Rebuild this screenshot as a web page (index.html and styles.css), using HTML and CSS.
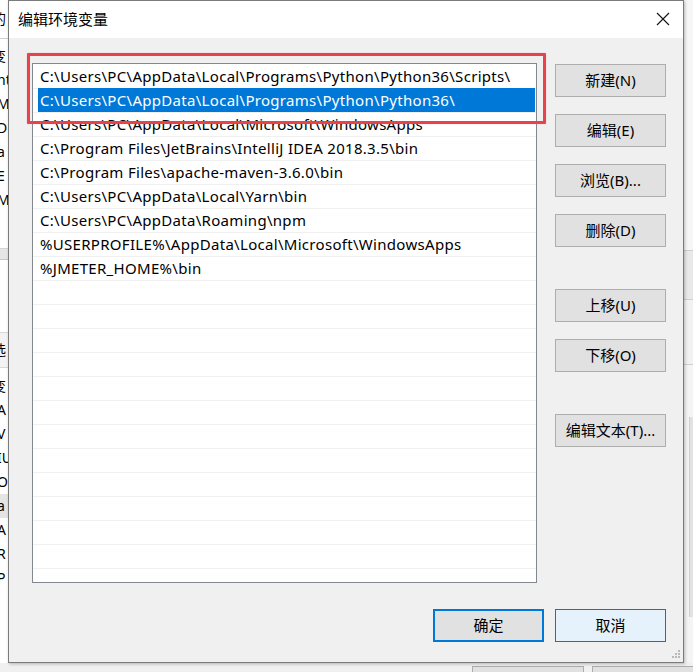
FILE: index.html
```html
<!DOCTYPE html>
<html lang="zh-CN">
<head>
<meta charset="utf-8">
<title>编辑环境变量</title>
<link rel="stylesheet" href="styles.css">
</head>
<body>
<div class="desktop">
  <div class="bgwin">
    <div class="bg-left">
      <div class="bg-top"><span class="frag f-cjk">的</span></div>
      <div class="bg-group1">
        <div class="frag f-cjk">变</div>
        <div class="frag">nt</div>
        <div class="frag">MA</div>
        <div class="frag">Dr</div>
        <div class="frag">a</div>
        <div class="frag">E</div>
        <div class="frag">M</div>
      </div>
      <div class="bg-band"></div>
      <div class="bg-head"><span class="frag f-cjk">选</span></div>
      <div class="bg-group2">
        <div class="frag f-cjk">变</div>
        <div class="frag">A</div>
        <div class="frag">V</div>
        <div class="frag">IU</div>
        <div class="frag">OS</div>
        <div class="frag hl">a</div>
        <div class="frag">A</div>
        <div class="frag">R</div>
        <div class="frag">P</div>
      </div>
    </div>
    <div class="bg-right">
      <div class="r1"></div>
      <div class="r2"></div>
      <div class="r3"></div>
      <div class="r4"></div>
    </div>
    <div class="bg-bottom">
      <span class="bgbtn b1"></span>
      <span class="bgbtn b2"></span>
    </div>
  </div>

  <div class="dialog">
    <div class="titlebar">
      <span class="title">编辑环境变量</span>
      <span class="close">
        <svg width="14" height="14" viewBox="0 0 14 14"><path d="M1 1 L13 13 M13 1 L1 13" stroke="#111" stroke-width="1.1" fill="none"/></svg>
      </span>
    </div>
    <div class="content">
      <div class="main">
        <div class="listbox">
          <div class="row"><span class="cell">C:\Users\PC\AppData\Local\Programs\Python\Python36\Scripts\</span></div>
          <div class="row"><span class="cell selected">C:\Users\PC\AppData\Local\Programs\Python\Python36\</span></div>
          <div class="row"><span class="cell">C:\Users\PC\AppData\Local\Microsoft\WindowsApps</span></div>
          <div class="row"><span class="cell">C:\Program Files\JetBrains\IntelliJ IDEA 2018.3.5\bin</span></div>
          <div class="row"><span class="cell">C:\Program Files\apache-maven-3.6.0\bin</span></div>
          <div class="row"><span class="cell">C:\Users\PC\AppData\Local\Yarn\bin</span></div>
          <div class="row"><span class="cell">C:\Users\PC\AppData\Roaming\npm</span></div>
          <div class="row"><span class="cell">%USERPROFILE%\AppData\Local\Microsoft\WindowsApps</span></div>
          <div class="row"><span class="cell">%JMETER_HOME%\bin</span></div>
          <div class="row"></div><div class="row"></div><div class="row"></div>
          <div class="row"></div><div class="row"></div><div class="row"></div>
          <div class="row"></div><div class="row"></div><div class="row"></div>
          <div class="row"></div><div class="row"></div><div class="row"></div>
          <div class="row"></div>
        </div>
        <div class="buttons">
          <button class="btn">新建(N)</button>
          <button class="btn">编辑(E)</button>
          <button class="btn">浏览(B)...</button>
          <button class="btn">删除(D)</button>
          <button class="btn gap-lg">上移(U)</button>
          <button class="btn">下移(O)</button>
          <button class="btn gap-lg">编辑文本(T)...</button>
        </div>
      </div>
      <div class="footer">
        <button class="btn btn-default">确定</button>
        <button class="btn btn-hover">取消</button>
      </div>
      <svg class="grip" width="12" height="12" viewBox="0 0 12 12">
        <g fill="#b8b8b8">
          <rect x="9" y="1" width="2" height="2"/>
          <rect x="6" y="4" width="2" height="2"/><rect x="9" y="4" width="2" height="2"/>
          <rect x="3" y="7" width="2" height="2"/><rect x="6" y="7" width="2" height="2"/><rect x="9" y="7" width="2" height="2"/>
        </g>
      </svg>
    </div>
  </div>

  <div class="highlight-box"></div>
</div>
</body>
</html>
```

FILE: styles.css
```css
html, body {
  margin: 0;
  padding: 0;
}
body {
  width: 693px;
  height: 672px;
  overflow: hidden;
  background: #f0f0f0;
  font-family: "Noto Sans", "Noto Sans CJK SC", sans-serif;
  color: #000;
}
.desktop {
  position: relative;
  width: 693px;
  height: 672px;
  overflow: hidden;
}

/* background window (partially visible behind dialog) */
.bgwin {
  position: absolute;
  left: 0;
  top: 0;
  width: 693px;
  height: 672px;
  background: #f0f0f0;
}
.bg-left {
  position: absolute;
  left: 0;
  top: 0;
  width: 8px;
  height: 672px;
  background: #fff;
  overflow: hidden;
  display: flex;
  flex-direction: column;
}
.frag {
  font-size: 14px;
  line-height: 24px;
  height: 24px;
  margin-left: -3px;
  white-space: nowrap;
}
.f-cjk { margin-left: -8px; }
.bg-top {
  height: 38px;
  border-bottom: 1px solid #cfcfcf;
  display: flex;
  align-items: center;
}
.bg-group1 {
  padding-top: 5px;
  height: 204px;
  border-bottom: 1px solid #d5d5d5;
}
.bg-band {
  height: 10px;
  background: #e6e6e6;
  border-bottom: 1px solid #c8c8c8;
}
.bg-head {
  margin-top: 72px;
  height: 34px;
  background: #f3f3f3;
  border-top: 1px solid #d8d8d8;
  border-bottom: 1px solid #d8d8d8;
  display: flex;
  align-items: center;
}
.bg-group2 {
  padding-top: 6px;
}
.frag.hl { background: #e5e5e5; }

.bg-right {
  position: absolute;
  left: 684px;
  top: 0;
  width: 9px;
  height: 672px;
  background: #f4f4f4;
}
.bg-right .r1 { height: 250px; border-bottom: 1px solid #cfcfcf; background: #f7f7f7; }
.bg-right .r2 { height: 48px; border-bottom: 1px solid #cfcfcf; background: #e9e9e9; }
.bg-right .r3 { height: 64px; border-bottom: 1px solid #cfcfcf; background: #f2f2f2; }
.bg-right .r4 { height: 200px; margin-left: 5px; border-left: 1px solid #d0d0d0; background: #e2e2e2; margin-top: 52px; }

.bg-bottom {
  position: absolute;
  left: 0;
  top: 663px;
  width: 693px;
  height: 9px;
  background: #f0f0f0;
}
.bgbtn {
  position: absolute;
  top: 3px;
  height: 12px;
  width: 110px;
  background: #e1e1e1;
  border: 1px solid #adadad;
}
.bgbtn.b1 { left: 472px; }
.bgbtn.b2 { left: 592px; }

/* dialog */
.dialog {
  position: absolute;
  left: 8px;
  top: 0;
  width: 676px;
  height: 663px;
  box-sizing: border-box;
  border: 1px solid #7b7b7b;
  background: #f0f0f0;
  box-shadow: 1px 1px 3px rgba(0,0,0,0.25);
  display: flex;
  flex-direction: column;
}
.titlebar {
  height: 37px;
  background: #fff;
  display: flex;
  align-items: center;
  justify-content: space-between;
  padding: 0 13px 0 9px;
  flex: none;
}
.title {
  font-size: 15px;
  font-family: "Noto Sans CJK SC", sans-serif;
  color: #000;
  margin-top: -2px;
}
.close {
  display: flex;
  width: 14px;
  height: 14px;
  margin-top: -1px;
}
.content {
  position: relative;
  flex: 1;
  padding: 25px 17px 0 23px;
  display: flex;
  flex-direction: column;
}
.main {
  display: flex;
  gap: 18px;
}
.listbox {
  width: 505px;
  height: 520px;
  box-sizing: border-box;
  border: 1px solid #828790;
  background: #fff;
  padding-top: 1px;
  overflow: hidden;
  flex: none;
}
.row {
  height: 24px;
  box-sizing: border-box;
  border-bottom: 1px solid #f0f0f0;
  padding: 0 1px 0 5px;
  display: flex;
}
.cell {
  flex: 1;
  font-size: 15px;
  letter-spacing: 0.3px;
  line-height: 23px;
  padding-left: 2px;
  white-space: nowrap;
  color: #000;
}
.cell.selected {
  background: #0078d7;
  color: #fff;
  height: 24px;
  margin-top: -1px;
  line-height: 25px;
}

.buttons {
  display: flex;
  flex-direction: column;
  gap: 17px;
  padding-top: 1px;
}
.btn {
  width: 111px;
  height: 33px;
  box-sizing: border-box;
  background: #e1e1e1;
  border: 1px solid #adadad;
  font-family: "Noto Sans", "Noto Sans CJK SC", sans-serif;
  font-size: 15px;
  color: #000;
  padding: 0 0 2px 0;
  margin: 0;
  display: flex;
  align-items: center;
  justify-content: center;
}
.btn.gap-lg { margin-top: 25px; }

.footer {
  margin-top: 26px;
  display: flex;
  justify-content: flex-end;
  gap: 11px;
}
.btn-default {
  border: 2px solid #0078d7;
}
.btn-hover {
  background: #e5f1fb;
  border: 1px solid #0078d7;
}
.grip {
  position: absolute;
  right: 2px;
  bottom: 1px;
}

.highlight-box {
  position: absolute;
  left: 27px;
  top: 53px;
  width: 519px;
  height: 71px;
  box-sizing: border-box;
  border: 3px solid #e8424c;
  border-radius: 1px;
  box-shadow: 0 0 1px rgba(232,66,76,0.5);
  pointer-events: none;
}
```
